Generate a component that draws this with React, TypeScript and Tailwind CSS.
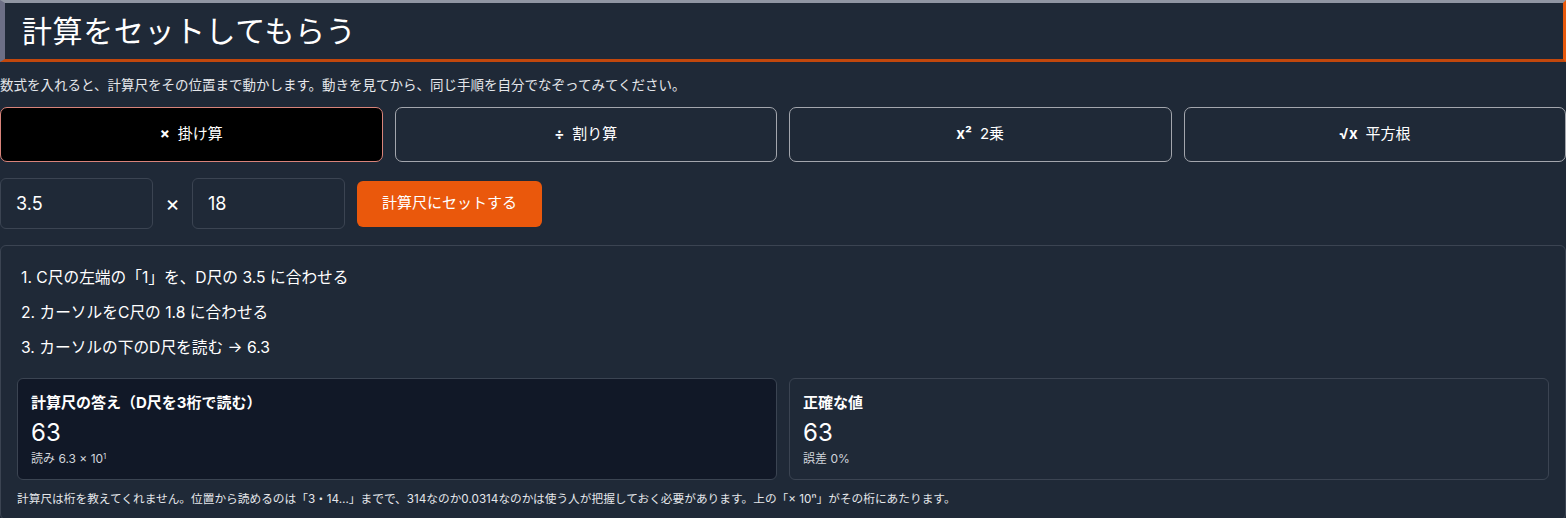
import { useState } from "react";

const ops = [
  { id: "mul", sym: "×", label: "掛け算" },
  { id: "div", sym: "÷", label: "割り算" },
  { id: "sq", sym: "x²", label: "2乗" },
  { id: "sqrt", sym: "√x", label: "平方根" },
];

const font = 'font-["Inter","Noto_Sans_CJK_JP",sans-serif]';

export default function App() {
  const [op, setOp] = useState("mul");
  const [a, setA] = useState("3.5");
  const [b, setB] = useState("18");

  return (
    <div className={`min-h-screen bg-[#1f2937] text-[#f3f4f6] ${font}`}>
      {/* heading with bevel-like border */}
      <h2 className="h-[62px] flex items-center pl-[17px] border-l-[5px] border-l-[#6c6f86] border-t-[3px] border-t-[#9096a3] border-r-[3px] border-r-[#e8590c] border-b-[3px] border-b-[#c2470c] text-[30px] font-normal tracking-[0.02em] text-white">
        計算をセットしてもらう
      </h2>

      <p className="mt-[14px] text-[13.5px] leading-[18px] text-[#e5e7eb]">
        数式を入れると、計算尺をその位置まで動かします。動きを見てから、同じ手順を自分でなぞってみてください。
      </p>

      <div className="mt-[13px] grid grid-cols-4 gap-[12px]">
        {ops.map((o) => (
          <button
            key={o.id}
            onClick={() => setOp(o.id)}
            className={`h-[55px] rounded-[7px] border text-[15px] text-white flex items-center justify-center gap-[8px] ${
              op === o.id ? "bg-black border-[#d9837a]" : "bg-transparent border-[#a3a6ad]"
            }`}
          >
            <span className="font-bold">{o.sym}</span>
            <span>{o.label}</span>
          </button>
        ))}
      </div>

      <div className="mt-[16px] flex items-center">
        <input
          value={a}
          onChange={(e) => setA(e.target.value)}
          className="w-[153px] h-[51px] rounded-[6px] border border-[#3b4452] bg-transparent pl-[15px] text-[18px] text-white outline-none"
        />
        <span className="w-[39px] text-center text-[22px] text-white">×</span>
        <input
          value={b}
          onChange={(e) => setB(e.target.value)}
          className="w-[153px] h-[51px] rounded-[6px] border border-[#3b4452] bg-transparent pl-[15px] text-[18px] text-white outline-none"
        />
        <button className="ml-[12px] h-[46px] w-[185px] rounded-[6px] bg-[#ea580c] text-[15px] text-white">
          計算尺にセットする
        </button>
      </div>

      <div className="mt-[16px] rounded-[6px] border border-[#3b4452] px-[16px] pt-[20px] pb-[12px]">
        <ol className="pl-[4px] flex flex-col gap-[12px] text-[15.7px] leading-[23px] text-white">
          <li>1. C尺の左端の「1」を、D尺の 3.5 に合わせる</li>
          <li>2. カーソルをC尺の 1.8 に合わせる</li>
          <li>3. カーソルの下のD尺を読む → 6.3</li>
        </ol>

        <div className="mt-[19px] grid grid-cols-2 gap-[12px]">
          <ResultCard title="計算尺の答え（D尺を3桁で読む）" value="63" dark>
            読み 6.3 × 10<sup className="text-[8px]">1</sup>
          </ResultCard>
          <ResultCard title="正確な値" value="63">
            誤差 0%
          </ResultCard>
        </div>

        <p className="mt-[11px] text-[11.7px] leading-[16px] text-[#e5e7eb]">
          計算尺は桁を教えてくれません。位置から読めるのは「3・14…」までで、314なのか0.0314なのかは使う人が把握しておく必要があります。上の「× 10ⁿ」がその桁にあたります。
        </p>
      </div>
    </div>
  );
}

function ResultCard(props: {
  title: string;
  value: string;
  dark?: boolean;
  children: React.ReactNode;
}) {
  const { title, value, dark, children } = props;
  return (
    <div
      className={`h-[102px] rounded-[6px] border border-[#3b4452] px-[13px] pt-[13px] ${
        dark ? "bg-[#111827]" : "bg-transparent"
      }`}
    >
      <div className="text-[15px] font-bold leading-[22px] text-white">{title}</div>
      <div className="mt-[4px] text-[24px] leading-[30px] text-white">{value}</div>
      <div className="mt-[3px] text-[12px] leading-[16px] text-[#d1d5db]">{children}</div>
    </div>
  );
}
